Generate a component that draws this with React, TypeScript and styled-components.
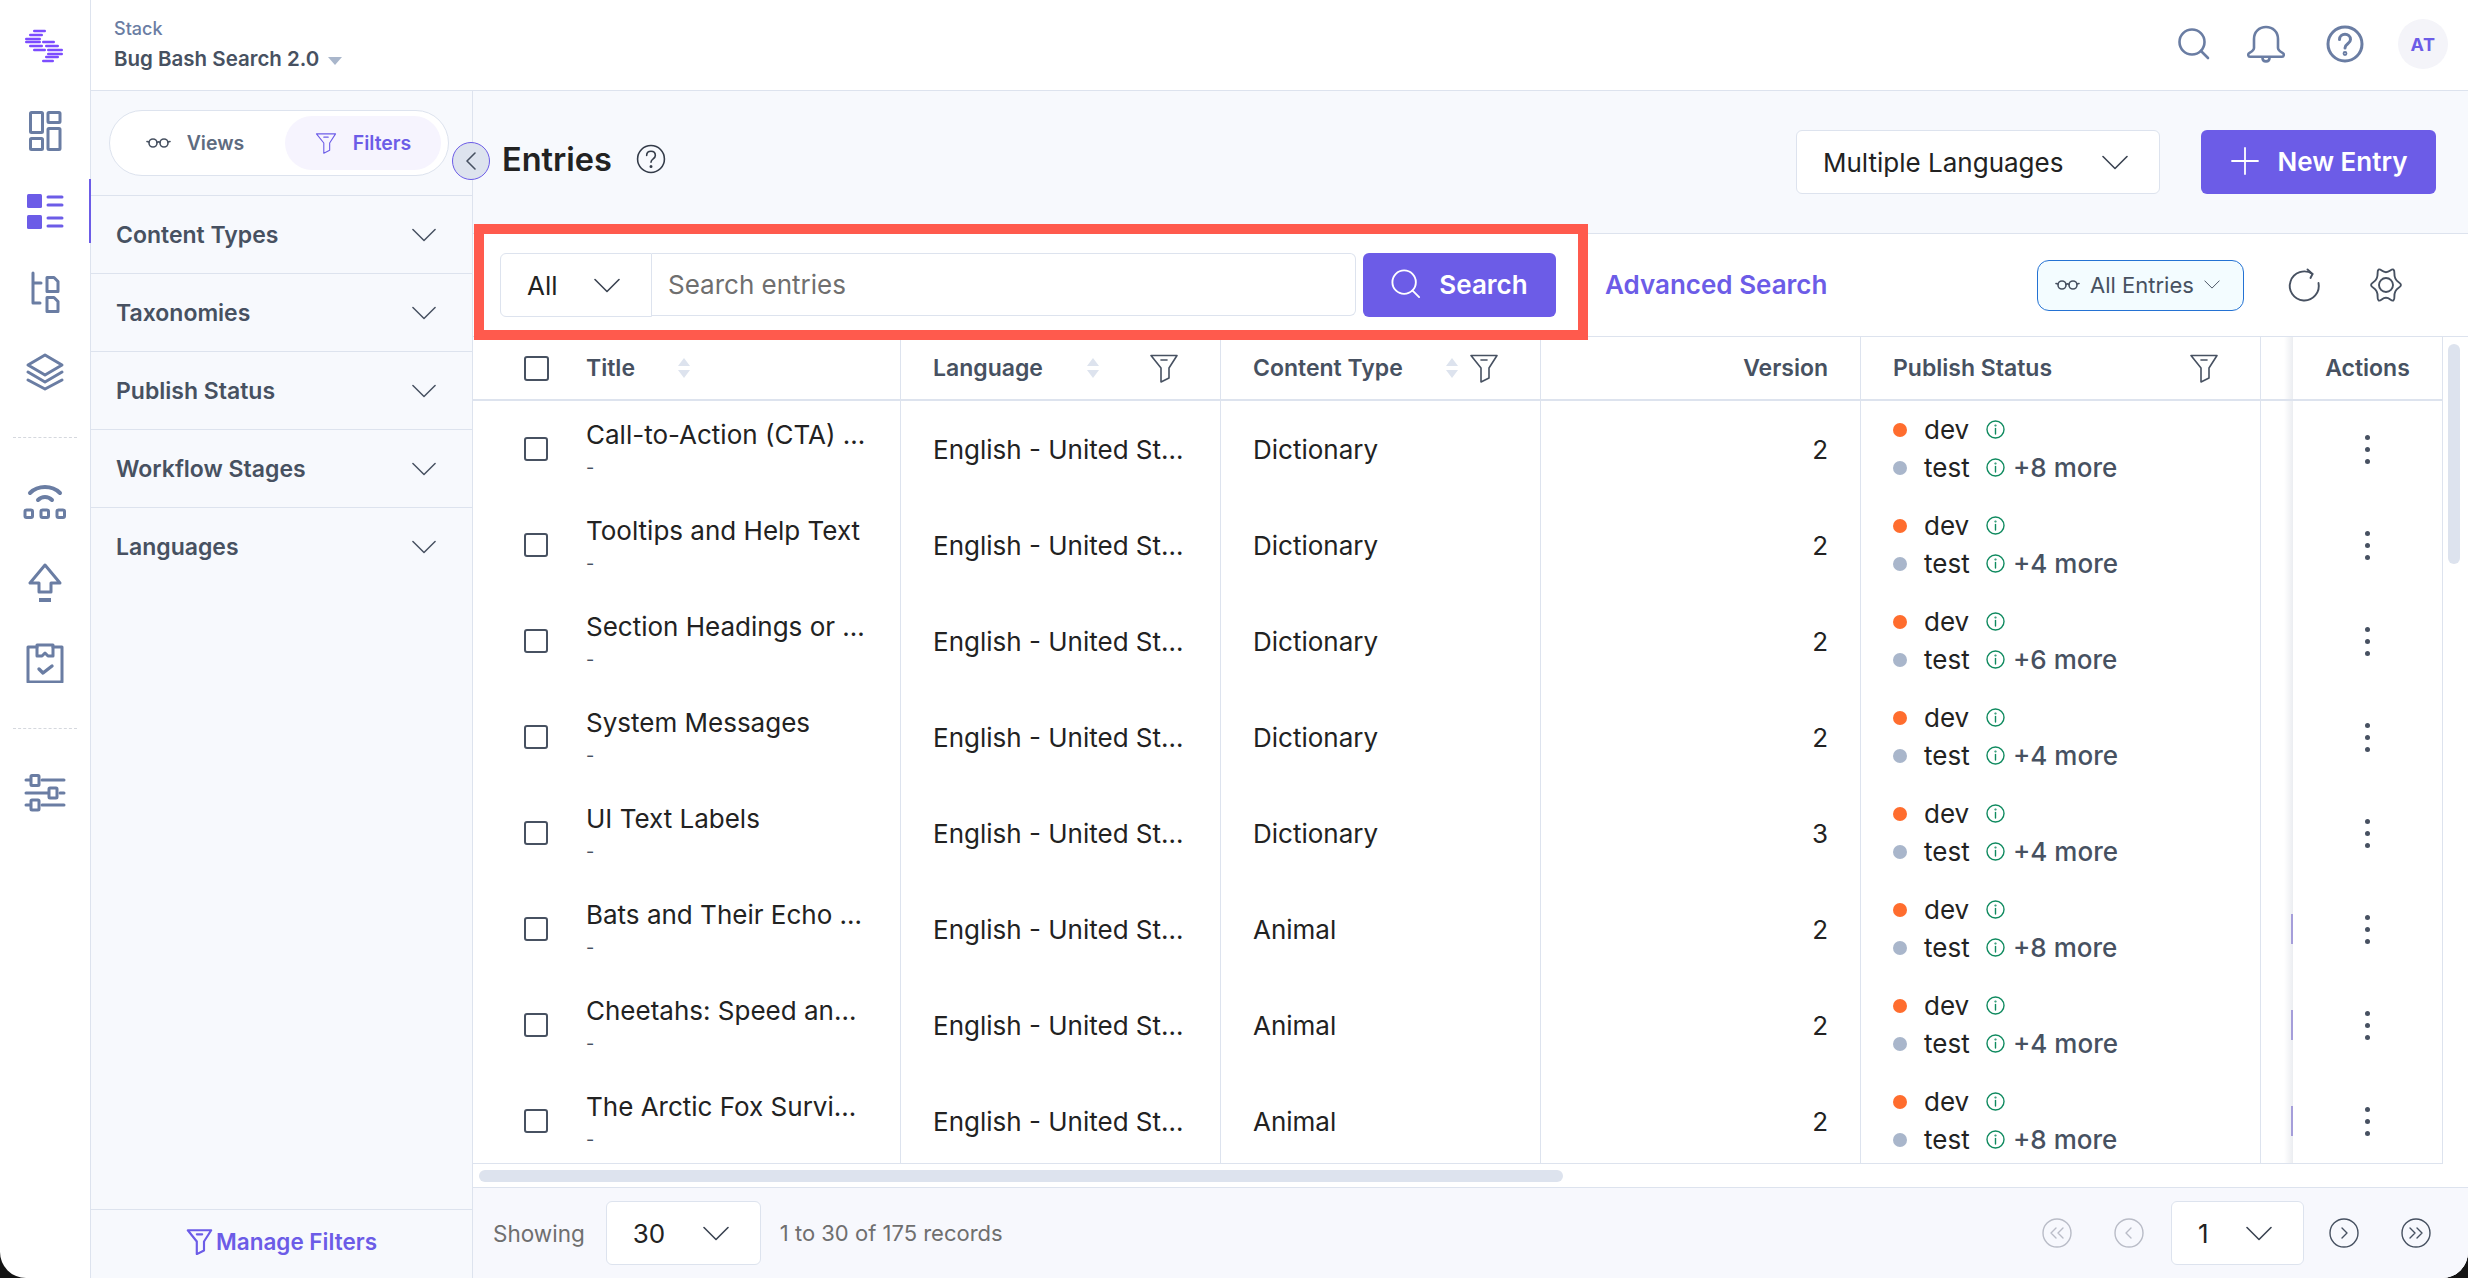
import React, { FC } from 'react';
import styled, { createGlobalStyle } from 'styled-components';

const GlobalStyle = createGlobalStyle`
	html, body {
		margin: 0;
		padding: 0;
		background: #141414;
		font-family: Inter, "Noto Sans", sans-serif;
		color: #222;
	}
	* { box-sizing: border-box; }
`;

const PURPLE = '#6c5ce7';
const LINE = '#dde3ee';
const SLATE = '#475161';
const RAIL = '#6a7da3';

const Frame = styled.div`
	position: relative;
	display: grid;
	grid-template-columns: 91px 1fr;
	width: 2468px;
	height: 1278px;
	background: #fff;
	border-radius: 0 0 26px 26px;
	overflow: hidden;
`;

const Rail = styled.nav`
	display: flex;
	flex-direction: column;
	align-items: center;
	border-right: 1px solid ${LINE};
`;

const LogoBox = styled.div`
	display: flex;
	align-items: center;
	justify-content: center;
	height: 91px;
	width: 100%;
`;

const NavItem = styled.div<{ $active?: boolean }>`
	position: relative;
	display: flex;
	align-items: center;
	justify-content: center;
	width: 100%;
	height: 80.3px;

	${({ $active }) =>
		$active &&
		`&::after {
			content: '';
			position: absolute;
			right: -1px;
			top: 8px;
			width: 2px;
			height: 64px;
			background: ${PURPLE};
		}`}
`;

const RailDivider = styled.div`
	width: 64px;
	margin: 25px 0 24px;
	border-top: 1px dashed #d5d8de;
`;

const Column = styled.div`
	display: flex;
	flex-direction: column;
	min-width: 0;
`;

const TopBar = styled.header`
	display: flex;
	align-items: center;
	justify-content: space-between;
	height: 91px;
	padding: 0 20px 2px 23px;
	border-bottom: 1px solid ${LINE};
	background: #fff;
`;

const StackInfo = styled.div`
	display: flex;
	flex-direction: column;
	gap: 8px;
	margin-top: 2px;
`;

const StackLabel = styled.div`
	font-size: 18px;
	line-height: 20px;
	font-weight: 500;
	color: #6a7da3;
`;

const StackName = styled.div`
	display: flex;
	align-items: center;
	gap: 9px;
	font-size: 20.5px;
	line-height: 24px;
	font-weight: 600;
	color: ${SLATE};
`;

const Caret = styled.span`
	width: 0;
	height: 0;
	margin-top: 4px;
	border-left: 7px solid transparent;
	border-right: 7px solid transparent;
	border-top: 8px solid #a9b6cb;
`;

const TopActions = styled.div`
	display: flex;
	align-items: center;
	gap: 37px;
`;

const HelpSlot = styled.span`
	display: flex;
	margin-left: 4px;
`;

const Avatar = styled.div`
	display: flex;
	align-items: center;
	justify-content: center;
	width: 50px;
	height: 50px;
	margin-left: -3px;
	border-radius: 50%;
	background: #f4f4f9;
	color: ${PURPLE};
	font-size: 18px;
	font-weight: 700;
	letter-spacing: 0.5px;
`;

const Workspace = styled.div`
	display: flex;
	flex: 1;
	min-height: 0;
`;

const FilterPanel = styled.aside`
	display: flex;
	flex-direction: column;
	width: 382px;
	background: #f7f9fd;
	border-right: 1px solid ${LINE};
`;

const ModeTabsBox = styled.div`
	height: 105px;
	padding: 19px 0 0 18px;
	border-bottom: 1px solid ${LINE};
`;

const ModeTabs = styled.div`
	display: flex;
	align-items: center;
	justify-content: space-between;
	width: 340px;
	height: 66px;
	padding: 0 7px 0 0;
	background: #fff;
	border: 1px solid ${LINE};
	border-radius: 33px;
`;

const ModeTab = styled.div<{ $active?: boolean }>`
	display: flex;
	align-items: center;
	justify-content: center;
	gap: 16px;
	width: ${({ $active }) => ($active ? '156px' : '170px')};
	height: 54px;
	border-radius: 27px;
	background: ${({ $active }) => ($active ? '#f6f4fe' : 'transparent')};
	color: ${({ $active }) => ($active ? PURPLE : '#5e6b80')};
	font-size: 19.5px;
	font-weight: 600;
`;

const FilterList = styled.div`
	flex: 1;
`;

const FilterRow = styled.div`
	display: flex;
	align-items: center;
	justify-content: space-between;
	height: 78px;
	padding: 0 36px 0 25px;
	border-bottom: 1px solid ${LINE};
	font-size: 23px;
	font-weight: 600;
	color: ${SLATE};

	&:last-child {
		border-bottom: none;
	}
`;

const ManageFilters = styled.div`
	display: flex;
	align-items: center;
	justify-content: center;
	gap: 3px;
	height: 69px;
	padding-bottom: 5px;
	border-top: 1px solid ${LINE};
	color: ${PURPLE};
	font-size: 22.5px;
	font-weight: 600;
`;

const CollapseButton = styled.div`
	position: absolute;
	left: 452px;
	top: 142px;
	display: flex;
	align-items: center;
	justify-content: center;
	width: 38px;
	height: 38px;
	border-radius: 50%;
	background: #dde3ee;
	border: 1px solid ${PURPLE};
	z-index: 3;
`;

const Main = styled.main`
	display: flex;
	flex-direction: column;
	flex: 1;
	min-width: 0;
	background: #f7f9fd;
`;

const PageHead = styled.div`
	display: flex;
	align-items: center;
	justify-content: space-between;
	height: 143px;
	padding: 0 32px 0 29px;
	border-bottom: 1px solid ${LINE};
`;

const PageTitle = styled.div`
	display: flex;
	align-items: center;
	gap: 24px;
	margin-top: -6px;
	font-size: 32.5px;
	font-weight: 600;
	color: #222;
`;

const HeadActions = styled.div`
	display: flex;
	align-items: center;
	gap: 41px;
`;

const SelectBox = styled.div<{ $w: number }>`
	display: flex;
	align-items: center;
	justify-content: space-between;
	width: ${({ $w }) => $w}px;
	height: 64px;
	padding: 0 31px 0 26px;
	background: #fff;
	border: 1px solid ${LINE};
	border-radius: 6px;
	font-size: 26px;
	color: #222;
`;

const PrimaryButton = styled.div<{ $w: number }>`
	display: flex;
	align-items: center;
	justify-content: center;
	gap: 18px;
	width: ${({ $w }) => $w}px;
	height: 64px;
	padding-bottom: 2px;
	background: ${PURPLE};
	border-radius: 6px;
	color: #fff;
	font-size: 26px;
	font-weight: 600;
`;

const Toolbar = styled.div`
	display: flex;
	align-items: center;
	height: 103px;
	padding: 0 64px 0 27px;
	background: #fff;
	border-bottom: 1px solid ${LINE};
`;

const SearchGroup = styled.div`
	display: flex;
	align-items: stretch;
`;

const ScopeSelect = styled.div`
	display: flex;
	align-items: center;
	justify-content: space-between;
	width: 152px;
	height: 64px;
	padding: 0 31px 0 26px;
	border: 1px solid ${LINE};
	border-radius: 6px 0 0 6px;
	font-size: 26px;
	color: #222;
`;

const SearchInput = styled.div`
	display: flex;
	align-items: center;
	width: 704px;
	height: 63px;
	padding: 0 16px;
	border: 1px solid ${LINE};
	border-left: none;
	border-radius: 0 6px 6px 0;
	font-size: 26px;
	color: #6f6f6f;
`;

const SearchButton = styled(PrimaryButton)`
	margin-left: 7px;
`;

const AdvancedLink = styled.div`
	margin: -2px 0 0 49px;
	color: ${PURPLE};
	font-size: 26px;
	font-weight: 600;
`;

const ToolbarRight = styled.div`
	display: flex;
	align-items: center;
	margin-left: auto;
`;

const ViewPill = styled.div`
	display: flex;
	align-items: center;
	gap: 10px;
	width: 207px;
	height: 51px;
	margin-right: 43px;
	padding: 0 14px 1px 17px;
	background: #f3fcff;
	border: 1px solid #2472d3;
	border-radius: 12px;
	font-size: 22px;
	color: ${SLATE};
`;

const GearSlot = styled.div`
	margin-left: 47px;
	display: flex;
`;

const TableArea = styled.div`
	display: flex;
	height: 827px;
	background: #fff;
`;

const TableClip = styled.div`
	position: relative;
	width: 1970px;
	height: 100%;
	overflow: hidden;
	border-right: 1px solid ${LINE};
	border-bottom: 1px solid ${LINE};
`;

const COLUMNS = '428px 320px 320px 320px 400px 32px 149px';

const HeadRow = styled.div`
	display: grid;
	grid-template-columns: ${COLUMNS};
	height: 64px;
	border-bottom: 2px solid ${LINE};
`;

const Row = styled.div`
	display: grid;
	grid-template-columns: ${COLUMNS};
	height: 96px;
`;

const HeadCell = styled.div<{ $right?: boolean }>`
	display: flex;
	align-items: center;
	justify-content: ${({ $right }) => ($right ? 'flex-end' : 'flex-start')};
	padding: 0 ${({ $right }) => ($right ? '32px' : '16px')} 0 32px;
	border-right: 1px solid ${LINE};
	font-size: 23px;
	font-weight: 600;
	color: ${SLATE};
`;

const TitleHeadCell = styled(HeadCell)`
	padding-left: 51px;
`;

const SortSlot = styled.span<{ $gap: number }>`
	display: flex;
	margin-left: ${({ $gap }) => $gap}px;
`;

const FilterSlot = styled.span`
	display: flex;
	margin-left: auto;
	margin-right: 25px;
`;

const Cell = styled.div<{ $right?: boolean }>`
	display: flex;
	align-items: center;
	justify-content: ${({ $right }) => ($right ? 'flex-end' : 'flex-start')};
	padding: 0 ${({ $right }) => ($right ? '32px' : '0')} 0 32px;
	border-right: 1px solid ${LINE};
	font-size: 26px;
	color: #222;
	white-space: nowrap;
`;

const TitleCell = styled(Cell)`
	padding-left: 51px;
`;

const ShadowGutter = styled.div`
	background: linear-gradient(to right, #fff 72%, #ebedf1 100%);
`;

const StickyHead = styled.div`
	display: flex;
	align-items: center;
	justify-content: center;
	background: #fff;
	font-size: 23px;
	font-weight: 600;
	color: ${SLATE};
`;

const StickyCell = styled.div<{ $mark?: boolean }>`
	position: relative;
	display: flex;
	flex-direction: column;
	align-items: center;
	justify-content: center;
	gap: 7px;
	background: #fff;

	${({ $mark }) =>
		$mark &&
		`&::before {
			content: '';
			position: absolute;
			left: -2px;
			top: 33px;
			width: 2px;
			height: 30px;
			background: #a59eda;
		}`}
`;

const Dot3 = styled.span`
	width: 5px;
	height: 5px;
	border-radius: 50%;
	background: ${SLATE};
`;

const Check = styled.span<{ $size: number }>`
	flex: none;
	width: ${({ $size }) => $size}px;
	height: ${({ $size }) => $size}px;
	margin-right: ${({ $size }) => 62 - $size}px;
	border: 2px solid ${SLATE};
	border-radius: 3px;
`;

const TitleStack = styled.div`
	display: flex;
	flex-direction: column;
	gap: 10px;
`;

const EntryTitle = styled.div`
	line-height: 27px;
`;

const EntrySub = styled.div`
	font-size: 18px;
	line-height: 20px;
	color: ${SLATE};
`;

const StatusList = styled.div`
	display: flex;
	flex-direction: column;
	gap: 11px;
	margin-top: -1px;
`;

const StatusLine = styled.div`
	display: flex;
	align-items: center;
	height: 27px;
`;

const EnvDot = styled.span<{ $color: string }>`
	flex: none;
	width: 14px;
	height: 14px;
	margin-right: 17px;
	border-radius: 50%;
	background: ${({ $color }) => $color};
`;

const EnvName = styled.span`
	width: 62px;
`;

const MoreText = styled.span`
	margin-left: 8px;
	color: ${SLATE};
	font-weight: 500;
`;

const ScrollGutter = styled.div`
	flex: 1;
	padding: 7px 0 0 5px;
`;

const ScrollThumbY = styled.div`
	width: 12px;
	height: 220px;
	border-radius: 6px;
	background: #dde3ee;
`;

const ScrollRail = styled.div`
	height: 23px;
	padding: 6px 0 0 6px;
	background: #fff;
`;

const ScrollThumbX = styled.div`
	width: 1084px;
	height: 12px;
	border-radius: 6px;
	background: #dde3ee;
`;

const Pager = styled.footer`
	display: flex;
	align-items: center;
	flex: 1;
	padding: 0 37px 0 20px;
	background: #f7f8fd;
	border-top: 1px solid ${LINE};
	color: #6f6f6f;
`;

const ShowingLabel = styled.span`
	margin-right: 21px;
	font-size: 22.5px;
`;

const RecordCount = styled.span`
	margin-left: 19px;
	font-size: 22px;
`;

const PagerSpacer = styled.div`
	flex: 1;
`;

const PagerNav = styled.div`
	display: flex;
	align-items: center;
	gap: 42px;
`;

const PagerSelect = styled(SelectBox)`
	margin: 0 -17px 0 -15px;
`;

const Svg: FC<{ w: number; h: number; c?: string; sw?: number; vb?: string; children: React.ReactNode }> = ({
	w,
	h,
	c = RAIL,
	sw = 3,
	vb,
	children,
}) => (
	<svg
		width={w}
		height={h}
		viewBox={vb || `0 0 ${w} ${h}`}
		fill="none"
		stroke={c}
		strokeWidth={sw}
		strokeLinecap="round"
		strokeLinejoin="round"
	>
		{children}
	</svg>
);

const Logo = () => {
	const bars: [number, number, number][] = [
		[30, 34, 47],
		[34, 30, 44],
		[38, 26, 42],
		[41, 26, 42],
		[41, 43, 56],
		[45, 30, 44],
		[45, 46, 60],
		[49, 34, 47],
		[49, 48, 64],
		[53, 48, 64],
		[56, 46, 60],
		[60, 43, 55],
	];
	return (
		<svg width="44" height="36" viewBox="24 27 44 36">
			{bars.map(([y, a, b]) => (
				<rect key={`${y}-${a}`} x={a} y={y - 1.2} width={b - a} height="2.4" rx="1.2" fill="#7c4dff" />
			))}
		</svg>
	);
};

const IconDashboard = () => (
	<Svg w={40} h={44}>
		<rect x="5.5" y="3.5" width="12" height="20" rx="1" />
		<rect x="23" y="3.5" width="12" height="10" rx="1" />
		<rect x="5.5" y="29.5" width="12" height="11" rx="1" />
		<rect x="23" y="19.5" width="12" height="21" rx="1" />
	</Svg>
);

const IconList = () => (
	<Svg w={40} h={40} c={PURPLE}>
		<rect x="2" y="3" width="15" height="14" rx="1.5" fill={PURPLE} stroke="none" />
		<rect x="2" y="24" width="15" height="14" rx="1.5" fill={PURPLE} stroke="none" />
		<path d="M23 6h14M23 14h14M23 27h14M23 35h14" />
	</Svg>
);

const IconHierarchy = () => (
	<Svg w={40} h={44}>
		<path d="M8 3v30h7M8 13h8" />
		<path d="M22 7.5h7l4 4v10H22z" />
		<path d="M22 27.5h7l4 4v10H22z" />
	</Svg>
);

const IconLayers = () => (
	<Svg w={40} h={40}>
		<path d="M20 3 37 13 20 23 3 13z" />
		<path d="M3 20 20 30 37 20" />
		<path d="M3 28 20 37 37 28" />
	</Svg>
);

const IconExtensions = () => (
	<Svg w={48} h={40}>
		<path d="M9 11C17 3 31 3 39 11" strokeWidth="4" />
		<path d="M17 18C21 14 27 14 31 18" strokeWidth="4" />
		<rect x="4" y="28" width="7.5" height="7.5" rx="1.5" />
		<rect x="20" y="28" width="7.5" height="7.5" rx="1.5" />
		<rect x="36" y="28" width="7.5" height="7.5" rx="1.5" />
	</Svg>
);

const IconUpload = () => (
	<Svg w={40} h={40}>
		<path d="M20 2 5 20h9v9h12v-9h9z" />
		<path d="M14 37h12" strokeWidth="4" strokeLinecap="butt" />
	</Svg>
);

const IconRelease = () => (
	<Svg w={40} h={40}>
		<path d="M12 4H3v35h34V4h-9" />
		<path d="M12 2h16v11h-5l-3-3-3 3h-5z" />
		<path d="m14 26 4 4 9-7" strokeWidth="3.4" />
	</Svg>
);

const IconSliders = () => (
	<Svg w={44} h={40} sw={3}>
		<path d="M3 7h4M19 7h22M3 20h22M37 20h4M3 32h4M19 32h22" />
		<rect x="8" y="2.5" width="8" height="10" rx="1" />
		<rect x="26" y="15" width="8" height="10" rx="1" />
		<rect x="8" y="27" width="8" height="10" rx="1" />
	</Svg>
);

const IconSearch: FC<{ c?: string; size?: number; sw?: number }> = ({ c = RAIL, size = 32, sw = 2.6 }) => (
	<Svg w={size} h={size} vb="0 0 32 32" c={c} sw={sw}>
		<circle cx="14" cy="14" r="12.500" />
		<path d="m23 23 7 7" />
	</Svg>
);

const IconBell = () => (
	<Svg w={38} h={38} sw={2.6} vb="0 0 38 38">
		<path d="M7 23V14C7 7 12 2 19 2s12 5 12 12v9c0 2 2 3.500 4.500 4.800 2 1 1.500 4-.5 4H3c-2 0-2.500-3-.5-4C5 26.500 7 25 7 23z" />
		<path d="M15.500 33c0 4.500 7 4.500 7 0" />
	</Svg>
);

const IconHelp: FC<{ size: number; c?: string; sw?: number }> = ({ size, c = RAIL, sw = 3 }) => (
	<Svg w={size} h={size} vb="0 0 38 38" c={c} sw={sw}>
		<circle cx="19" cy="19" r="17" />
		<path d="M13.500 14.500c0-7 11-7 11 0 0 4.500-5.500 4-5.500 8.500" />
		<circle cx="19" cy="28.500" r="0.9" />
	</Svg>
);

const IconGlasses: FC<{ c?: string; w?: number }> = ({ c = SLATE, w = 25 }) => (
	<Svg w={w} h={Math.round((w * 12) / 25)} vb="0 0 25 12" c={c} sw={1.6}>
		<circle cx="7" cy="6" r="4" />
		<circle cx="18" cy="6" r="4" />
		<path d="M11 5.500c1-.8 2-.8 3 0M3 5 1 4.500M22 5l2-.5" />
	</Svg>
);

const IconFunnel: FC<{ size: number; c?: string; sw?: number }> = ({ size, c = SLATE, sw = 1.6 }) => (
	<Svg w={size} h={size} vb="0 0 30 30" c={c} sw={sw}>
		<path d="M2 2.500h26L20 15v10l-8 4V15z" />
		<path d="M12 7h6" />
	</Svg>
);

const Chevron: FC<{ size?: number; c?: string; sw?: number }> = ({ size = 26, c = SLATE, sw = 1.6 }) => (
	<Svg w={size} h={Math.round(size * 0.58)} vb="0 0 26 15" c={c} sw={sw}>
		<path d="m1 1.500 12 12 12-12" />
	</Svg>
);

const IconPlus = () => (
	<Svg w={30} h={30} c="#fff" sw={1.8}>
		<path d="M15 2v26M2 15h26" />
	</Svg>
);

const IconRefresh = () => (
	<Svg w={34} h={34} c={SLATE} sw={1.9}>
		<path d="M25.500 6A14.500 14.500 0 1 0 31.500 15" />
		<path d="m20.500 1.500 5 4.500-2 4" />
	</Svg>
);

// six soft lobes, drawn from control points so the outline stays smooth
const gearPath = (() => {
	const pts = Array.from({ length: 12 }, (_, i) => {
		const a = (i * Math.PI) / 6;
		const r = i % 2 === 0 ? 20 : 11;
		return [18 + r * 0.86 * Math.cos(a), 18 + r * 1.02 * Math.sin(a)];
	});
	const mid = (p: number[], q: number[]) => [(p[0] + q[0]) / 2, (p[1] + q[1]) / 2];
	const start = mid(pts[11], pts[0]);
	const segs = pts.map((p, i) => {
		const m = mid(p, pts[(i + 1) % 12]);
		return `Q${p[0].toFixed(2)} ${p[1].toFixed(2)} ${m[0].toFixed(2)} ${m[1].toFixed(2)}`;
	});
	return `M${start[0].toFixed(2)} ${start[1].toFixed(2)}${segs.join('')}Z`;
})();

const IconGear = () => (
	<Svg w={36} h={36} c={SLATE} sw={1.9}>
		<circle cx="18" cy="18" r="7" />
		<path d={gearPath} />
	</Svg>
);

const IconInfo = () => (
	<Svg w={19} h={19} c="#0f8a5f" sw={1.4}>
		<circle cx="9.500" cy="9.500" r="8.500" />
		<path d="M9.500 8.500v5.500" />
		<circle cx="9.500" cy="5.500" r="0.4" />
	</Svg>
);

const SortArrows = () => (
	<svg width="14" height="22" viewBox="0 0 14 22" fill="#dde3ee">
		<path d="M7 1 13 9H1zM7 21 1 13h12z" />
	</svg>
);

const PagerCircle: FC<{ d: string; off?: boolean }> = ({ d, off }) => (
	<Svg w={30} h={30} c={off ? '#b9bcc7' : SLATE} sw={1.4}>
		<circle cx="15" cy="15" r="14" />
		<path d={d} />
	</Svg>
);

interface IEntry {
	title: string;
	type: string;
	version: number;
	more: number;
	mark?: boolean;
}

const ENTRIES: IEntry[] = [
	{ title: 'Call-to-Action (CTA) …', type: 'Dictionary', version: 2, more: 8 },
	{ title: 'Tooltips and Help Text', type: 'Dictionary', version: 2, more: 4 },
	{ title: 'Section Headings or …', type: 'Dictionary', version: 2, more: 6 },
	{ title: 'System Messages', type: 'Dictionary', version: 2, more: 4 },
	{ title: 'UI Text Labels', type: 'Dictionary', version: 3, more: 4 },
	{ title: 'Bats and Their Echo …', type: 'Animal', version: 2, more: 8, mark: true },
	{ title: 'Cheetahs: Speed an…', type: 'Animal', version: 2, more: 4, mark: true },
	{ title: 'The Arctic Fox Survi…', type: 'Animal', version: 2, more: 8, mark: true },
];

const FILTERS = ['Content Types', 'Taxonomies', 'Publish Status', 'Workflow Stages', 'Languages'];

const SearchHighlight = styled.div`
	position: absolute;
	left: 474px;
	top: 224px;
	width: 1114px;
	height: 116px;
	border: 10px solid #ff5a4d;
	pointer-events: none;
	z-index: 2;
`;

const App: FC = () => (
	<Frame>
		<GlobalStyle />
		<Rail>
			<LogoBox>
				<Logo />
			</LogoBox>
			<NavItem>
				<IconDashboard />
			</NavItem>
			<NavItem $active>
				<IconList />
			</NavItem>
			<NavItem>
				<IconHierarchy />
			</NavItem>
			<NavItem>
				<IconLayers />
			</NavItem>
			<RailDivider />
			<NavItem>
				<IconExtensions />
			</NavItem>
			<NavItem>
				<IconUpload />
			</NavItem>
			<NavItem>
				<IconRelease />
			</NavItem>
			<RailDivider />
			<NavItem>
				<IconSliders />
			</NavItem>
		</Rail>
		<Column>
			<TopBar>
				<StackInfo>
					<StackLabel>Stack</StackLabel>
					<StackName>
						Bug Bash Search 2.0
						<Caret />
					</StackName>
				</StackInfo>
				<TopActions>
					<IconSearch />
					<IconBell />
					<HelpSlot>
						<IconHelp size={38} />
					</HelpSlot>
					<Avatar>AT</Avatar>
				</TopActions>
			</TopBar>
			<Workspace>
				<FilterPanel>
					<ModeTabsBox>
						<ModeTabs>
							<ModeTab>
								<IconGlasses c="#475161" />
								Views
							</ModeTab>
							<ModeTab $active>
								<IconFunnel size={22} c={PURPLE} sw={1.5} />
								Filters
							</ModeTab>
						</ModeTabs>
					</ModeTabsBox>
					<FilterList>
						{FILTERS.map((name) => (
							<FilterRow key={name}>
								{name}
								<Chevron size={24} />
							</FilterRow>
						))}
					</FilterList>
					<ManageFilters>
						<IconFunnel size={27} c={PURPLE} sw={2.4} />
						Manage Filters
					</ManageFilters>
				</FilterPanel>
				<Main>
					<PageHead>
						<PageTitle>
							Entries
							<IconHelp size={30} c="#333b48" sw={2} />
						</PageTitle>
						<HeadActions>
							<SelectBox $w={364}>
								Multiple Languages
								<Chevron c="#3b4452" />
							</SelectBox>
							<PrimaryButton $w={235}>
								<IconPlus />
								New Entry
							</PrimaryButton>
						</HeadActions>
					</PageHead>
					<Toolbar>
						<SearchGroup>
							<ScopeSelect>
								All
								<Chevron c="#3b4452" />
							</ScopeSelect>
							<SearchInput>Search entries</SearchInput>
							<SearchButton $w={193}>
								<IconSearch c="#fff" size={30} sw={2} />
								Search
							</SearchButton>
						</SearchGroup>
						<AdvancedLink>Advanced Search</AdvancedLink>
						<ToolbarRight>
							<ViewPill>
								<IconGlasses />
								All Entries
								<Chevron size={16} />
							</ViewPill>
							<IconRefresh />
							<GearSlot>
								<IconGear />
							</GearSlot>
						</ToolbarRight>
					</Toolbar>
					<TableArea>
						<TableClip>
							<HeadRow>
								<TitleHeadCell>
									<Check $size={25} />
									Title
									<SortSlot $gap={42}>
										<SortArrows />
									</SortSlot>
								</TitleHeadCell>
								<HeadCell>
									Language
									<SortSlot $gap={43}>
										<SortArrows />
									</SortSlot>
									<FilterSlot>
										<IconFunnel size={30} />
									</FilterSlot>
								</HeadCell>
								<HeadCell>
									Content Type
									<SortSlot $gap={42}>
										<SortArrows />
									</SortSlot>
									<FilterSlot>
										<IconFunnel size={30} />
									</FilterSlot>
								</HeadCell>
								<HeadCell $right>Version</HeadCell>
								<HeadCell>
									Publish Status
									<FilterSlot>
										<IconFunnel size={30} />
									</FilterSlot>
								</HeadCell>
								<ShadowGutter />
								<StickyHead>Actions</StickyHead>
							</HeadRow>
							{ENTRIES.map((entry) => (
								<Row key={entry.title}>
									<TitleCell>
										<Check $size={24} />
										<TitleStack>
											<EntryTitle>{entry.title}</EntryTitle>
											<EntrySub>-</EntrySub>
										</TitleStack>
									</TitleCell>
									<Cell>English - United St…</Cell>
									<Cell>{entry.type}</Cell>
									<Cell $right>{entry.version}</Cell>
									<Cell>
										<StatusList>
											<StatusLine>
												<EnvDot $color="#ff6d2e" />
												<EnvName>dev</EnvName>
												<IconInfo />
											</StatusLine>
											<StatusLine>
												<EnvDot $color="#a9b6cb" />
												<EnvName>test</EnvName>
												<IconInfo />
												<MoreText>+{entry.more} more</MoreText>
											</StatusLine>
										</StatusList>
									</Cell>
									<ShadowGutter />
									<StickyCell $mark={entry.mark}>
										<Dot3 />
										<Dot3 />
										<Dot3 />
									</StickyCell>
								</Row>
							))}
						</TableClip>
						<ScrollGutter>
							<ScrollThumbY />
						</ScrollGutter>
					</TableArea>
					<ScrollRail>
						<ScrollThumbX />
					</ScrollRail>
					<Pager>
						<ShowingLabel>Showing</ShowingLabel>
						<SelectBox $w={155}>
							30
							<Chevron c="#3b4452" />
						</SelectBox>
						<RecordCount>1 to 30 of 175 records</RecordCount>
						<PagerSpacer />
						<PagerNav>
							<PagerCircle off d="M14 10l-5 5 5 5M21 10l-5 5 5 5" />
							<PagerCircle off d="M17 10l-5 5 5 5" />
							<PagerSelect $w={133}>
								1
								<Chevron c="#3b4452" />
							</PagerSelect>
							<PagerCircle d="M13 10l5 5-5 5" />
							<PagerCircle d="M9 10l5 5-5 5M16 10l5 5-5 5" />
						</PagerNav>
					</Pager>
				</Main>
			</Workspace>
		</Column>
		<CollapseButton>
			<Svg w={14} h={22} c={SLATE} sw={1.6}>
				<path d="M11 3 3 11l8 8" />
			</Svg>
		</CollapseButton>
		<SearchHighlight />
	</Frame>
);

export default App;
